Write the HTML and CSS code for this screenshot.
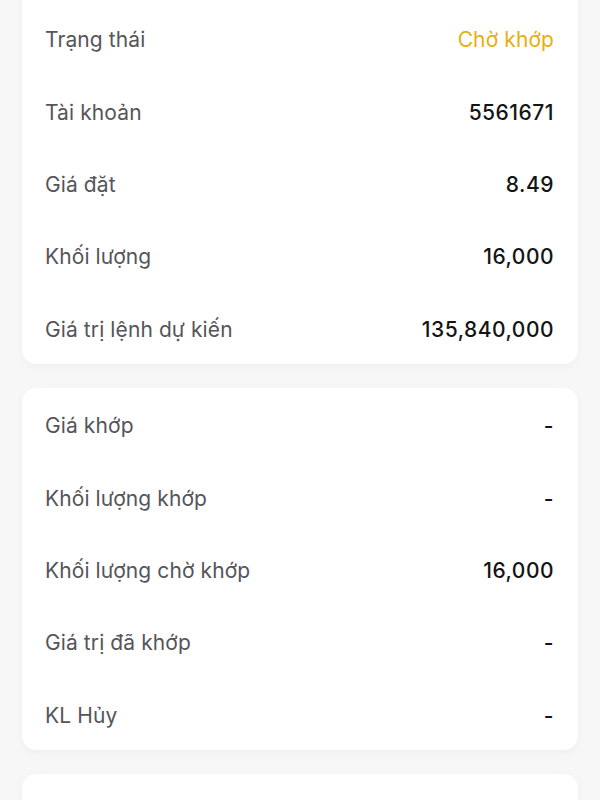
FILE: index.html
```html
<!DOCTYPE html>
<html lang="vi">
<head>
<meta charset="utf-8">
<link rel="stylesheet" href="styles.css">
</head>
<body>
<main class="page">
  <section class="card card-first">
    <div class="row"><span class="label">Trạng thái</span><span class="value status">Chờ khớp</span></div>
    <div class="row"><span class="label">Tài khoản</span><span class="value">5561671</span></div>
    <div class="row"><span class="label">Giá đặt</span><span class="value">8.49</span></div>
    <div class="row"><span class="label">Khối lượng</span><span class="value">16,000</span></div>
    <div class="row"><span class="label">Giá trị lệnh dự kiến</span><span class="value">135,840,000</span></div>
  </section>
  <section class="card">
    <div class="row"><span class="label">Giá khớp</span><span class="value">-</span></div>
    <div class="row"><span class="label">Khối lượng khớp</span><span class="value">-</span></div>
    <div class="row"><span class="label">Khối lượng chờ khớp</span><span class="value">16,000</span></div>
    <div class="row"><span class="label">Giá trị đã khớp</span><span class="value">-</span></div>
    <div class="row"><span class="label">KL Hủy</span><span class="value">-</span></div>
  </section>
  <section class="card card-last"></section>
</main>
</body>
</html>
```

FILE: styles.css
```css
html, body {
  margin: 0;
  padding: 0;
  background: #f7f7f7;
}
body {
  font-family: Inter, "Noto Sans", sans-serif;
  overflow: hidden;
  height: 800px;
}
.page {
  display: flex;
  flex-direction: column;
  gap: 24px;
  padding: 0 22px;
}
.card {
  background: #ffffff;
  border-radius: 14px;
  box-shadow: 0 2px 8px rgba(0, 0, 0, 0.04);
  padding: 0 24px 0 23px;
}
.card-first {
  margin-top: -20px;
  padding-top: 22px;
}
.card-last {
  height: 120px;
}
.row {
  box-sizing: border-box;
  height: 72.4px;
  padding-top: 3px;
  display: flex;
  align-items: center;
  justify-content: space-between;
  font-size: 21px;
  letter-spacing: 0.1px;
}
.label {
  color: #55555a;
}
.value {
  color: #141414;
  font-weight: 450;
  letter-spacing: 0.5px;
}
.status {
  color: #e6b00e;
  font-weight: 400;
  letter-spacing: 0.1px;
}
```
